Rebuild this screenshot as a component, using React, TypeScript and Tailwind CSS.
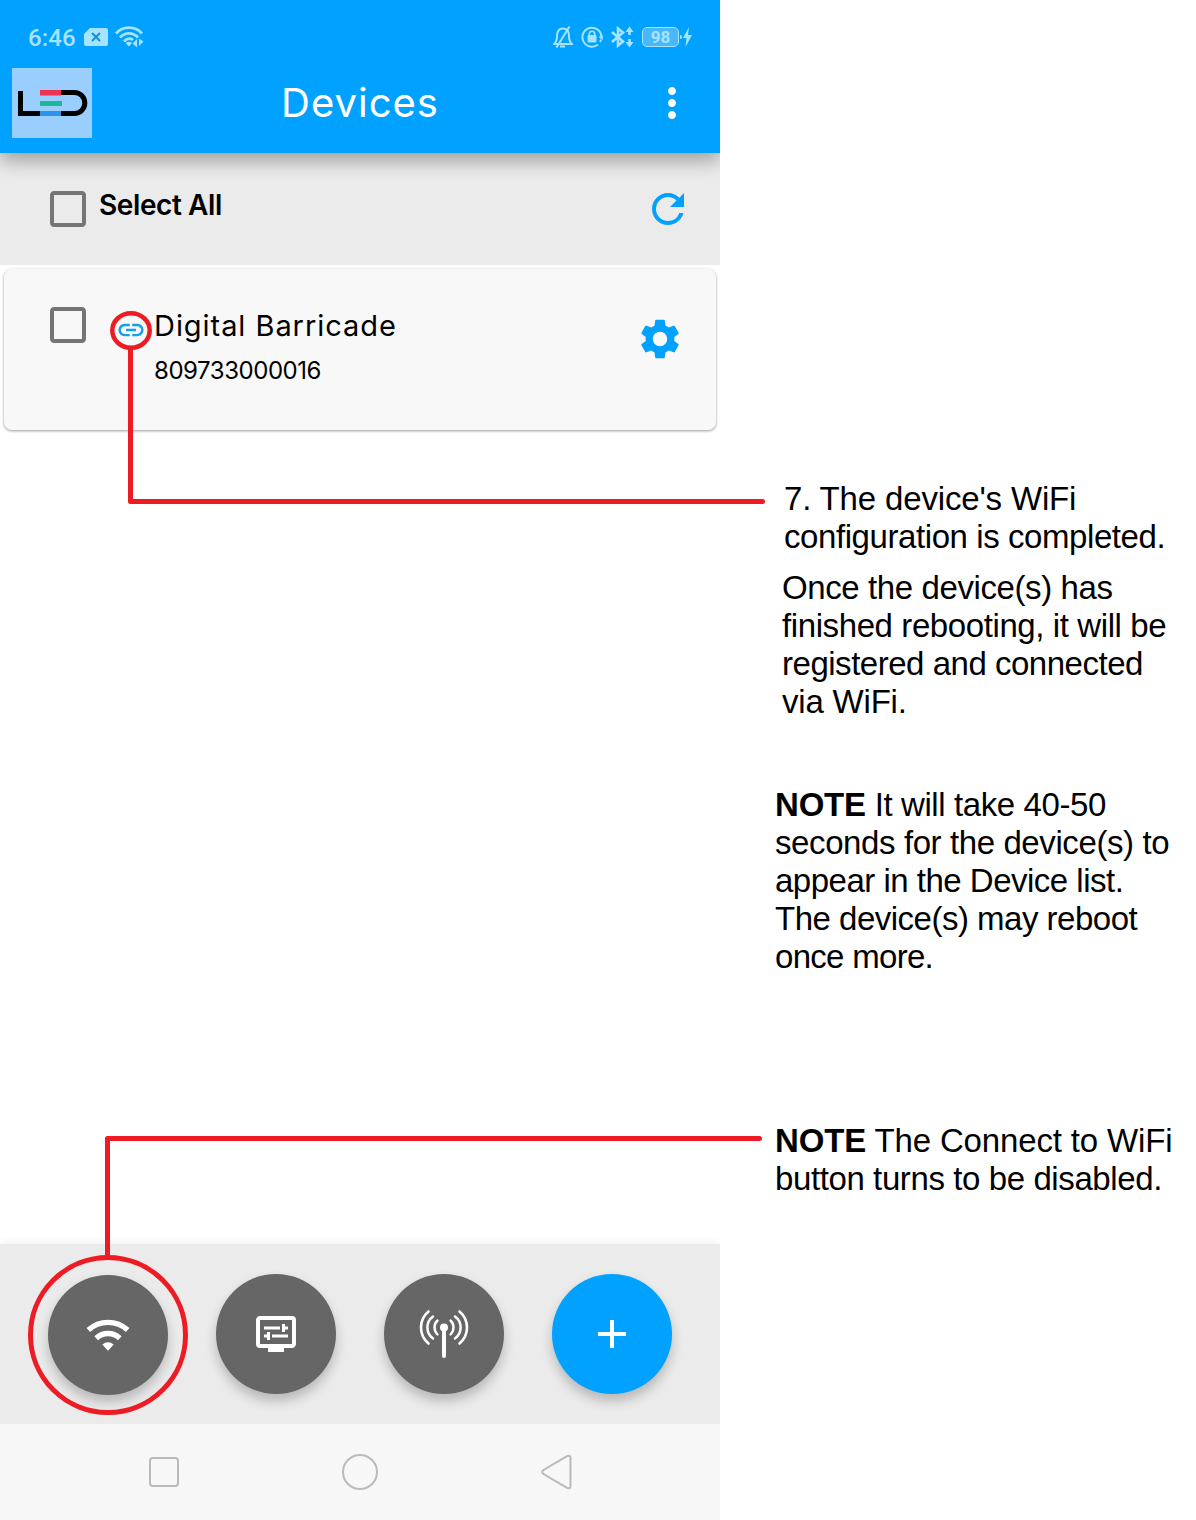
import type { ReactNode } from "react";
import {
  MdAdd,
  MdCheckBoxOutlineBlank,
  MdDisplaySettings,
  MdLink,
  MdMoreVert,
  MdRefresh,
  MdSettings,
} from "react-icons/md";

function StatusBar() {
  return (
    <div className="flex h-[68px] items-center pt-[6px] pl-7 text-[#a6e3ff]">
      <span className="w-[56px] pt-[2px] text-[24px] leading-6 font-medium font-['Roboto',sans-serif] tracking-[0.1px] whitespace-nowrap">6:46</span>
      <svg width="24" height="18" viewBox="0 0 24 18">
        <path d="M6 0H22a2 2 0 0 1 2 2V16a2 2 0 0 1-2 2H2a2 2 0 0 1-2-2V6Z" fill="currentColor" />
        <path d="M8 5l8 8M16 5l-8 8" stroke="#1290e4" strokeWidth="2" />
      </svg>
      <svg className="ml-[7px]" width="29" height="24" viewBox="0 0 29 24" fill="none" stroke="currentColor" strokeWidth="2.7">
        <path d="M1 8.500C8 .7 20 .7 27 8.500M5 12.500C10 7 18 7 23 12.500M9 16.500C12 13 16 13 18 15" />
        <path d="M10.500 18Q14 15.500 17 18L14 21.500Z" fill="currentColor" stroke="none" />
        <path d="M22 14V22.500L17.500 18.500ZM24 13.500L28.500 16.500L24 21Z" fill="currentColor" stroke="none" />
      </svg>
      <svg className="ml-[409px]" width="20" height="24" viewBox="0 0 20 24" fill="none" stroke="currentColor" strokeWidth="2">
        <path d="M1 19H19C16.500 17 16 15 16 11C16 6 14 3.500 10 3.500S4 6 4 11C4 15 3.500 17 1 19Z" />
        <path d="M16.500 1.500L3.500 22.500" />
        <path d="M7 21.500h5" />
      </svg>
      <svg className="ml-[8px]" width="22" height="22" viewBox="0 0 22 22" fill="none" stroke="currentColor" strokeWidth="2">
        <path d="M17 18.500A9.500 9.500 0 1 1 20.400 10.500M20 13.500A9.500 9.500 0 0 1 19 16" />
        <path d="M21.800 9.500V14L17.500 11Z" fill="currentColor" stroke="none" />
        <rect x="6.500" y="9" width="9" height="7.500" rx="1" fill="currentColor" stroke="none" />
        <path d="M8.300 9.500V8a2.700 2.700 0 0 1 5.400 0v1.500" strokeWidth="1.600" />
      </svg>
      <svg className="ml-[8px]" width="23" height="22" viewBox="0 0 23 22" fill="none" stroke="currentColor" strokeWidth="2.600">
        <path d="M1 6L12 15.500L7 19.500V2.500L12 6.500L1 16" />
        <path d="M18.500 3V9M18.500 13V19" />
        <path d="M18.500 .5L22.500 6H14.500ZM18.500 21.500L22.500 16H14.500Z" fill="currentColor" stroke="none" />
      </svg>
      <span className="ml-[8px] flex h-5 w-[37px] items-center justify-center rounded-[5px] border border-current bg-[#48b8fb] text-[17px] leading-4 font-bold font-['Roboto',sans-serif]">98</span>
      <span className="ml-px h-1 w-[2px] rounded-r bg-current" />
      <svg className="ml-px" width="9" height="20" viewBox="0 0 9 20">
        <path d="M6 0L0 11H3.500L2.500 20L9 8H5Z" fill="currentColor" />
      </svg>
    </div>
  );
}

function LedLogo() {
  return (
    <div className="flex h-[70px] w-[80px] items-center justify-center bg-[#99ceff]">
      <svg width="80" height="70" viewBox="0 0 80 70" fill="none">
        <path d="M8.500 23V45.500H28" stroke="#000" strokeWidth="5" />
        <path d="M49 24.500H62.300A10.500 10.500 0 0 1 62.300 45.500H49" stroke="#000" strokeWidth="5" />
        <rect x="28" y="22" width="21" height="5.500" fill="#f2304f" />
        <rect x="28" y="33" width="22" height="5" fill="#1cb795" />
        <rect x="28" y="43" width="21" height="5" fill="#2f93ee" />
      </svg>
    </div>
  );
}

function RoundButton({ children, className }: { children: ReactNode; className: string }) {
  return (
    <button className={`flex size-[120px] shrink-0 items-center justify-center rounded-full text-white shadow-[0_7px_12px_rgba(0,0,0,0.22)] ${className}`}>
      {children}
    </button>
  );
}

function Phone() {
  return (
    <section className="flex h-[1520px] w-[720px] shrink-0 flex-col overflow-hidden bg-white">
      <header className="relative z-10 h-[153px] bg-[#00a1ff] shadow-[0_8px_18px_rgba(0,0,0,0.32)]">
        <StatusBar />
        <div className="flex items-center justify-between px-3">
          <LedLogo />
          <h1 className="text-[40px] leading-[70px] font-normal tracking-[1px] text-white font-['Inter',sans-serif]">Devices</h1>
          <div className="flex w-20 justify-end pr-3"><MdMoreVert className="shrink-0" size={48} color="white" /></div>
        </div>
      </header>

      <div className="flex h-[112px] shrink-0 items-center bg-[#ebebeb] pr-7 pl-11">
        <MdCheckBoxOutlineBlank size={48} color="#757575" />
        <span className="mb-[8px] ml-[7px] grow text-[28px] leading-9 font-semibold tracking-[-0.4px] font-['Inter',sans-serif]">Select All</span>
        <MdRefresh size={48} color="#00a1ff" />
      </div>

      <div className="mx-1 mt-[4px] flex h-[161px] shrink-0 items-start rounded-[8px] bg-[#f8f8f8] pr-8 pl-10 shadow-[0_1px_3px_rgba(0,0,0,0.4)]">
        <MdCheckBoxOutlineBlank className="mt-8 shrink-0" size={48} color="#757575" />
        <MdLink className="mt-[46px] ml-6 shrink-0" size={30} color="#14a0e6" />
        <div className="mt-[37px] ml-[7px] grow font-['Inter',sans-serif] whitespace-nowrap">
          <div className="pl-px text-[29px] leading-10 tracking-[0.95px]">Digital Barricade</div>
          <div className="mt-[6px] pl-px text-[24px] leading-[38px] tracking-[-0.45px]">809733000016</div>
        </div>
        <MdSettings className="mt-[46px] shrink-0" size={48} color="#00a1ff" />
      </div>

      <div className="mt-auto flex h-[180px] shrink-0 items-center justify-between bg-[#ebebeb] px-12 shadow-[0_-2px_8px_rgba(0,0,0,0.06)]">
        <RoundButton className="mt-[2px] bg-[#666666]">
          <svg width="48" height="40" viewBox="0 0 48 40" fill="none" stroke="currentColor" strokeWidth="5.400">
            <path d="M4.300 15C15.500 4.800 32.500 4.800 43.700 15" />
            <path d="M12.200 23.200C19 17 29 17 35.800 23.200" />
            <path d="M18.300 29.500Q24 25 29.700 29.500L24 35.700Z" fill="currentColor" stroke="none" />
          </svg>
        </RoundButton>
        <RoundButton className="bg-[#666666]"><MdDisplaySettings size={48} /></RoundButton>
        <RoundButton className="bg-[#666666]">
          <svg width="50" height="50" viewBox="0 0 50 50" fill="none" stroke="currentColor" strokeLinecap="round">
            <circle cx="25" cy="18.500" r="4" fill="currentColor" stroke="none" />
            <path d="M25 19V47" strokeWidth="4" />
            <path d="M18.500 11.500C14.500 15 14.500 21.500 18.500 25.500M31.500 11.500C35.500 15 35.500 21.500 31.500 25.500" strokeWidth="2.400" />
            <path d="M14 7.500C6.500 13 6.500 24 14 29.500M36 7.500C43.500 13 43.500 24 36 29.500" strokeWidth="2.500" />
            <path d="M9.500 2.500C-.5 11 -.5 26 9.500 34.500M40.500 2.500C50.500 11 50.500 26 40.500 34.500" strokeWidth="2.600" />
          </svg>
        </RoundButton>
        <RoundButton className="bg-[#00a1ff]"><MdAdd size={48} /></RoundButton>
      </div>

      <nav className="flex h-24 shrink-0 items-center justify-between bg-[#f7f7f7] pr-[148px] pl-[149px]">
        <span className="size-[30px] rounded-[4px] border-2 border-[#bababa]" />
        <span className="size-9 rounded-full border-2 border-[#bababa]" />
        <svg width="31" height="36" viewBox="0 0 31 36" fill="none" stroke="#bababa" strokeWidth="2">
          <path d="M29.500 4V31.500Q29.500 35.500 26 33.800L2.500 20Q0 18 2.500 16L26 2.200Q29.500 .5 29.500 4Z" />
        </svg>
      </nav>
    </section>
  );
}

function Notes() {
  return (
    <aside className="w-[476px] pt-[480px] pl-[55px] text-[33px] leading-[38px] tracking-[-0.4px] whitespace-nowrap text-black font-['Liberation_Sans',sans-serif]">
      <p className="pl-[9px]">
        <span className="block tracking-[-0.16px]">7. The device's WiFi</span>
        <span className="block tracking-[-0.42px]">configuration is completed.</span>
      </p>
      <p className="mt-[13px] pl-[7px]">
        <span className="block">Once the device(s) has</span>
        <span className="block">finished rebooting, it will be</span>
        <span className="block tracking-[-0.48px]">registered and connected</span>
        <span className="block tracking-[-0.2px]">via WiFi.</span>
      </p>
      <p className="mt-[65px]">
        <span className="block"><b className="tracking-[-0.2px]">NOTE</b> It will take 40-50</span>
        <span className="block">seconds for the device(s) to</span>
        <span className="block tracking-[-0.5px]">appear in the Device list.</span>
        <span className="block tracking-[-0.5px]">The device(s) may reboot</span>
        <span className="block tracking-[-0.7px]">once more.</span>
      </p>
      <p className="mt-[146px]">
        <span className="block tracking-[-0.15px]"><b>NOTE</b> The Connect to WiFi</span>
        <span className="block">button turns to be disabled.</span>
      </p>
    </aside>
  );
}

function Callouts() {
  return (
    <svg className="pointer-events-none absolute inset-0 z-20" width="1196" height="1520" viewBox="0 0 1196 1520" fill="none" stroke="#ed1c24" strokeWidth="5" strokeLinejoin="round" strokeLinecap="round">
      <ellipse cx="131" cy="330.500" rx="18.700" ry="17.300" strokeWidth="4.500" />
      <path d="M130.500 350V501.500H762.500" />
      <circle cx="108" cy="1335" r="77.500" />
      <path d="M107.500 1257V1138.500H759.500" />
    </svg>
  );
}

export default function App() {
  return (
    <main className="relative flex h-[1520px] w-[1196px] overflow-hidden bg-white text-black">
      <Phone />
      <Notes />
      <Callouts />
    </main>
  );
}
